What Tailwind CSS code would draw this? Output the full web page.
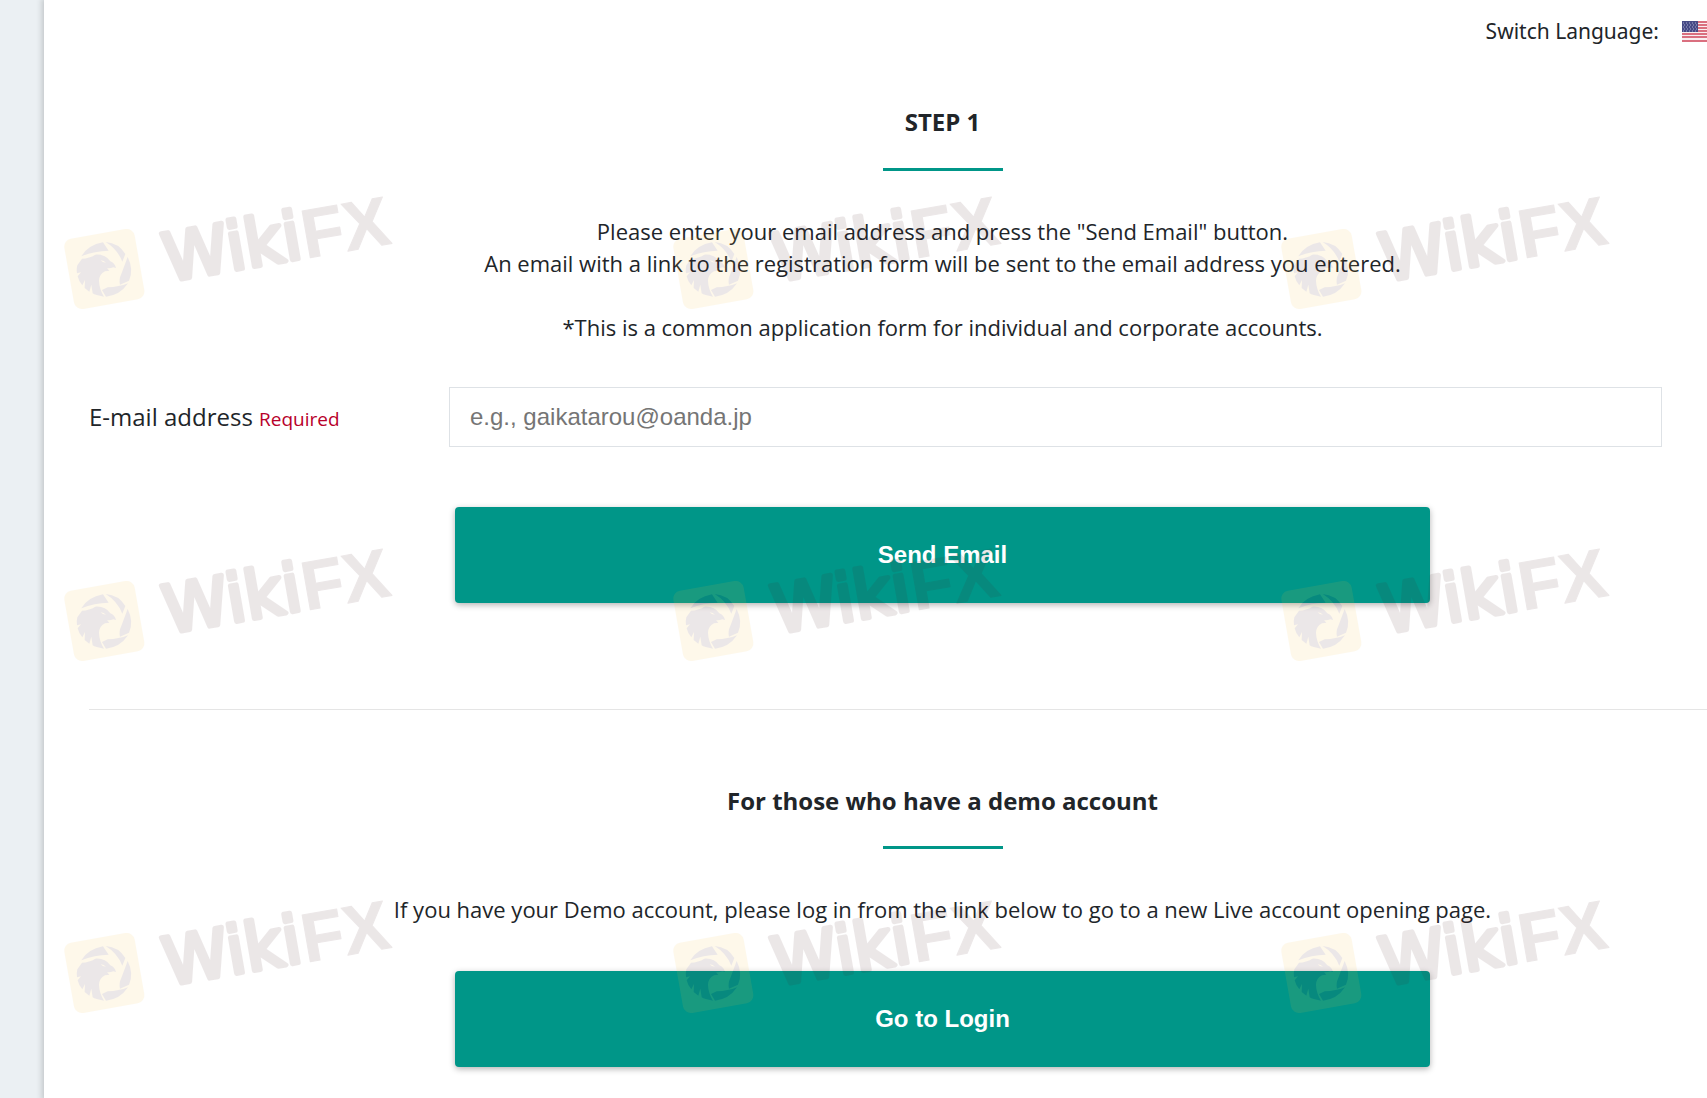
<!DOCTYPE html>
<html lang="en">
<head>
  <meta charset="UTF-8" />
  <meta name="viewport" content="width=device-width, initial-scale=1.0" />
  <title>Account Opening</title>
  <script src="https://cdn.jsdelivr.net/npm/@tailwindcss/browser@4"></script>
</head>
<body class="min-h-screen overflow-hidden bg-[#ebf0f3] font-['Open_Sans',sans-serif] text-[#212529]">
  <div class="relative min-h-screen overflow-hidden">
    <!-- PAGE: runs past the right edge of the window -->
    <main class="ml-11 -mr-[134px] min-h-screen bg-white px-[45px] pb-8 shadow-[0_0_6px_2px_rgba(0,0,0,0.18)]">
      <header class="flex h-[63px] items-center justify-end gap-[23px] pr-[82px] font-['Noto_Sans',sans-serif] text-[21px]">
        <span>Switch Language:</span>
        <button type="button" aria-label="English">
          <svg class="h-[21px] w-8" viewBox="0 0 32 21">
            <rect width="32" height="21" fill="#f8eef0" />
            <path d="M0 1h32M0 4h32M0 7h32M0 10h32M0 13h32M0 16h32M0 20h32" stroke="#d0455a" stroke-width="1.7" />
            <rect width="16" height="11" fill="#464a86" />
            <path d="M1 2h15M2 4h14M1 6h15M2 8h14M1 10h15" stroke="#a9abcc" stroke-width="1" stroke-dasharray="1 2" />
          </svg>
        </button>
      </header>

      <section class="flex flex-col items-center pt-[39px] text-center">
        <h2 class="text-2xl font-bold leading-10">STEP 1</h2>
        <div class="mt-[26px] h-[3px] w-[120px] bg-[#009688]"></div>
        <p class="mt-11 text-[22px] leading-8">
          Please enter your email address and press the "Send Email" button.<br />
          An email with a link to the registration form will be sent to the email address you entered.<br />
          <br />
          *This is a common application form for individual and corporate accounts.
        </p>
      </section>

      <form>
        <div class="mt-11 flex items-center pr-[134px]">
          <label for="email" class="w-[360px] shrink-0 text-2xl">E-mail address <span class="text-[19px] text-[#b8002a]">Required</span></label>
          <input id="email" type="email" placeholder="e.g., gaikatarou@oanda.jp" class="h-[60px] min-w-0 flex-1 border border-[#dee2e6] px-5 font-['Liberation_Sans',sans-serif] text-2xl placeholder:text-[#757575]" />
        </div>
        <button type="button" class="mx-auto mt-[60px] block h-24 w-[975px] rounded bg-[#009688] font-['Liberation_Sans',sans-serif] text-2xl font-bold text-white shadow-[0_2px_6px_rgba(0,0,0,0.3)]">Send Email</button>
      </form>

      <hr class="mt-[106px] border-[#e5e5e5]" />

      <section class="flex flex-col items-center pt-[71px] text-center">
        <h2 class="text-2xl font-bold leading-10">For those who have a demo account</h2>
        <div class="mt-[25px] h-[3px] w-[120px] bg-[#009688]"></div>
        <p class="mt-11 text-[22px] leading-8">If you have your Demo account, please log in from the link below to go to a new Live account opening page.</p>
        <button type="button" class="mt-[46px] h-24 w-[975px] rounded bg-[#009688] font-['Liberation_Sans',sans-serif] text-2xl font-bold text-white shadow-[0_2px_6px_rgba(0,0,0,0.3)]">Go to Login</button>
      </section>
    </main>

    <!-- WATERMARK -->
    <svg class="pointer-events-none absolute left-0 top-0 h-[1098px] w-[1707px]" viewBox="0 0 1707 1098" aria-hidden="true">
      <defs>
        <g id="mark" opacity="0.1">
          <g transform="translate(60 226) scale(0.3333)">
            <rect x="26" y="22" width="214" height="214" rx="24" fill="#f6c03c" transform="rotate(-10 133 129)" />
            <g fill="#4a1f2a">
              <path d="M64 91Q84 57 129 49L146 74Q103 75 64 91Z" />
              <path d="M137 48Q176 51 196 84L187 107Q172 69 137 48Z" />
              <path d="M203 93Q222 130 207 164L180 176Q176 160 184 144Z" />
              <path d="M204 172Q180 208 138 212L126 192L143 184Q177 183 204 172Z" />
              <path d="M52 118L66 98Q88 97 106 86Q136 84 151 106Q164 111 168 126L160 124Q149 128 141 126L148 134L135 136Q117 145 117 165Q118 190 132 212Q106 208 98 202L94 176L88 197L74 186L75 162L67 178Q57 168 53 151L63 139L51 142Q49 130 52 118Z" />
            </g>
            <path d="M122 103Q132 104 138 110Q127 110 122 103Z" fill="#f6c03c" />
          </g>
          <g transform="rotate(-9.9 165 284)" fill="#4a1f24" stroke="#4a1f24" stroke-linejoin="round">
            <text x="168" y="282" font-family="DejaVu Sans, sans-serif" font-size="66" stroke-width="5">Wiki</text>
            <text x="308" y="283" font-family="Liberation Sans, sans-serif" font-weight="bold" font-size="69" stroke-width="1">FX</text>
          </g>
        </g>
      </defs>
      <use href="#mark" />
      <use href="#mark" x="609" />
      <use href="#mark" x="1217" />
      <use href="#mark" y="352" />
      <use href="#mark" x="609" y="352" />
      <use href="#mark" x="1217" y="352" />
      <use href="#mark" y="704" />
      <use href="#mark" x="609" y="704" />
      <use href="#mark" x="1217" y="704" />
    </svg>
  </div>
</body>
</html>
